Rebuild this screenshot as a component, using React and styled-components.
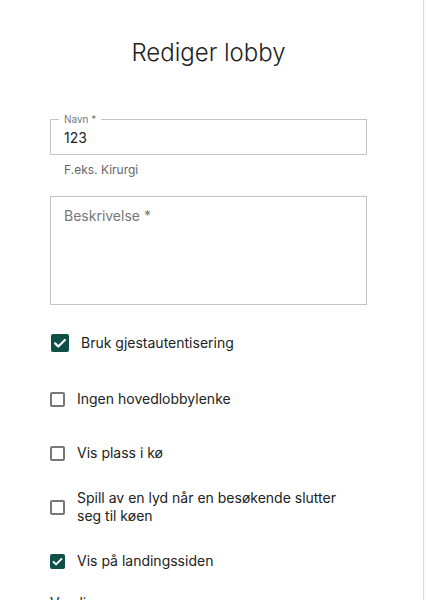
import React from 'react'
import styled, { createGlobalStyle } from 'styled-components'

const GlobalStyle = createGlobalStyle`
  html, body {
    margin: 0;
    padding: 0;
    background: #fafafa;
    font-family: Inter, "Noto Sans", sans-serif;
    color: #222;
  }
  * { box-sizing: border-box; }
`

const options = [
  { label: 'Bruk gjestautentisering', checked: true, large: true },
  { label: 'Ingen hovedlobbylenke', checked: false },
  { label: 'Vis plass i kø', checked: false },
  { label: 'Spill av en lyd når en besøkende slutter seg til køen', checked: false },
  { label: 'Vis på landingssiden', checked: true },
]

function App() {
  return (
    <>
      <GlobalStyle />
      <Panel>
        <Title>Rediger lobby</Title>
        <Form>
          <Field>
            <FloatLabel>Navn *</FloatLabel>
            <Value>123</Value>
          </Field>
          <Helper>F.eks. Kirurgi</Helper>
          <TextArea>
            <Placeholder>Beskrivelse *</Placeholder>
          </TextArea>
          <Options>
            {options.map(o => (
              <Row key={o.label} $large={o.large}>
                <Box $checked={o.checked} $large={o.large}>
                  {o.checked && (
                    <svg viewBox="0 0 24 24" width="100%" height="100%">
                      <path d="M5.5 12.5l4.2 4.2L18.5 7.9" fill="none" stroke="#fff" strokeWidth="3" strokeLinecap="round" strokeLinejoin="round" />
                    </svg>
                  )}
                </Box>
                <RowLabel>{o.label}</RowLabel>
              </Row>
            ))}
          </Options>
          <Section>Varsling</Section>
        </Form>
      </Panel>
    </>
  )
}

const Panel = styled.div`
  width: 424px;
  min-height: 100vh;
  background: #fff;
  border-right: 1px solid #dcdcdc;
  padding: 37px 0 40px;
`

const Title = styled.h1`
  margin: 0;
  width: 417px;
  text-align: center;
  font-size: 24px;
  line-height: 32px;
  font-weight: 300;
  color: #222;
`

const Form = styled.div`
  width: 317px;
  margin: 50px 0 0 50px;
  display: flex;
  flex-direction: column;
`

const Field = styled.div`
  position: relative;
  height: 36px;
  border: 1px solid #c4c4c4;
  display: flex;
  align-items: center;
  padding: 2px 13px 0;
`

const FloatLabel = styled.span`
  position: absolute;
  top: -7px;
  left: 8px;
  padding: 0 5px;
  background: #fff;
  font-size: 10px;
  line-height: 12px;
  color: #777;
`

const Value = styled.span`
  font-size: 14px;
  line-height: 20px;
  color: #222;
`

const Helper = styled.div`
  margin: 7px 0 0 14px;
  font-size: 12px;
  line-height: 16px;
  color: #666;
`

const TextArea = styled.div`
  margin-top: 18px;
  height: 109px;
  border: 1px solid #c4c4c4;
  padding: 8px 13px;
`

const Placeholder = styled.span`
  font-size: 14px;
  line-height: 20px;
  color: #777;
`

const Options = styled.div`
  margin-top: 20px;
  display: flex;
  flex-direction: column;
  gap: 18px;
`

const Row = styled.label`
  display: flex;
  align-items: center;
  min-height: 36px;
  padding-right: 30px;
  margin-bottom: ${p => (p.$large ? '2px' : '0')};
`

const Box = styled.span`
  flex: none;
  width: ${p => (p.$large ? '18px' : '15px')};
  height: ${p => (p.$large ? '18px' : '15px')};
  margin-left: ${p => (p.$large ? '1px' : '0')};
  margin-right: 12px;
  border-radius: 2px;
  border: ${p => (p.$checked ? 'none' : '2px solid #777')};
  background: ${p => (p.$checked ? '#0e5048' : '#fff')};
  display: flex;
`

const RowLabel = styled.span`
  font-size: 14px;
  line-height: 18px;
  color: #222;
`

const Section = styled.div`
  margin-top: 15px;
  font-size: 14px;
  line-height: 18px;
  color: #222;
`

export default App
